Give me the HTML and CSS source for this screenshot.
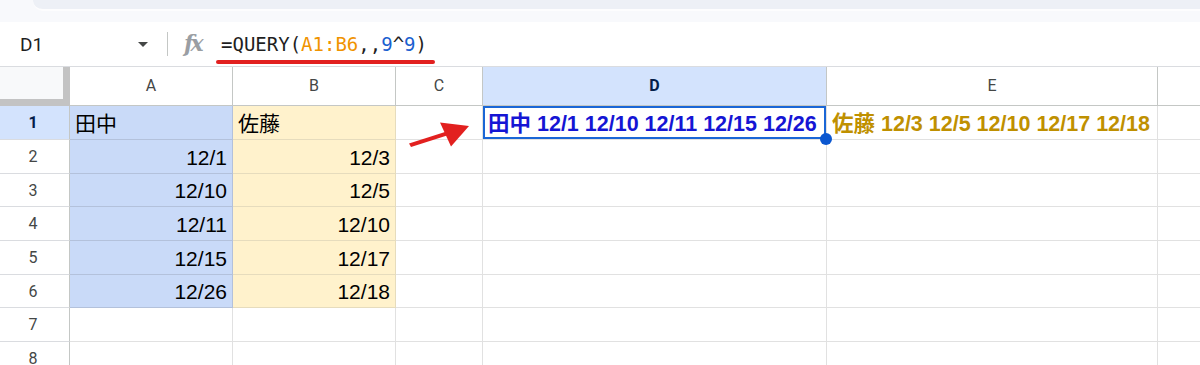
FILE: index.html
```html
<!DOCTYPE html>
<html lang="ja">

<head>
    <meta charset="utf-8">
    <meta name="viewport" content="width=device-width, initial-scale=1.0">
    <title>QUERY 9^9</title>

    <link rel="stylesheet" href="styles.css">
</head>

<body>
    <div class="topbar">
        <div class="pill"></div>
    </div>

    <div class="fbar">
        <div class="namebox">D1</div>
        <div class="caret"></div>
        <div class="sep"></div>
        <div class="fx">fx</div>
        <div class="formula">=QUERY(<span class="ref">A1:B6</span>,,<span class="num">9</span>^<span class="num">9</span>)</div>
    </div>

    <main class="grid">
        <!-- header -->
        <div class="corner"></div>
        <div class="colhead">A</div>
        <div class="colhead">B</div>
        <div class="colhead">C</div>
        <div class="colhead active">D</div>
        <div class="colhead">E</div>
        <div class="colhead last"></div>

        <!-- 1 -->
        <div class="rowhead active">1</div>
        <div class="cell a">田中</div>
        <div class="cell b">佐藤</div>
        <div class="cell"></div>
        <div class="cell sel"><span class="tanaka">田中 12/1 12/10 12/11 12/15 12/26</span></div>
        <div class="cell"><span class="sato">佐藤 12/3 12/5 12/10 12/17 12/18</span></div>
        <div class="cell last"></div>

        <!-- 2 -->
        <div class="rowhead">2</div>
        <div class="cell a right">12/1</div>
        <div class="cell b right">12/3</div>
        <div class="cell"></div>
        <div class="cell"></div>
        <div class="cell"></div>
        <div class="cell last"></div>

        <!-- 3 -->
        <div class="rowhead">3</div>
        <div class="cell a right">12/10</div>
        <div class="cell b right">12/5</div>
        <div class="cell"></div>
        <div class="cell"></div>
        <div class="cell"></div>
        <div class="cell last"></div>

        <!-- 4 -->
        <div class="rowhead">4</div>
        <div class="cell a right">12/11</div>
        <div class="cell b right">12/10</div>
        <div class="cell"></div>
        <div class="cell"></div>
        <div class="cell"></div>
        <div class="cell last"></div>

        <!-- 5 -->
        <div class="rowhead">5</div>
        <div class="cell a right">12/15</div>
        <div class="cell b right">12/17</div>
        <div class="cell"></div>
        <div class="cell"></div>
        <div class="cell"></div>
        <div class="cell last"></div>

        <!-- 6 -->
        <div class="rowhead">6</div>
        <div class="cell a right">12/26</div>
        <div class="cell b right">12/18</div>
        <div class="cell"></div>
        <div class="cell"></div>
        <div class="cell"></div>
        <div class="cell last"></div>

        <!-- 7 -->
        <div class="rowhead">7</div>
        <div class="cell"></div>
        <div class="cell"></div>
        <div class="cell"></div>
        <div class="cell"></div>
        <div class="cell"></div>
        <div class="cell last"></div>

        <!-- 8 -->
        <div class="rowhead">8</div>
        <div class="cell"></div>
        <div class="cell"></div>
        <div class="cell"></div>
        <div class="cell"></div>
        <div class="cell"></div>
        <div class="cell last"></div>
    </main>

    <svg class="arrow" width="80" height="45" viewBox="0 0 80 45">
        <polygon points="9,33.5 11,37 47,25.5 45,22" fill="#e2201f" />
        <polygon points="40,12.5 51,36.5 69,16" fill="#e2201f" />
    </svg>
</body>

</html>
```

FILE: styles.css
```css
body {
    margin: 0;
    background-color: white;
    font-family: "Liberation Sans", "Noto Sans CJK JP", sans-serif;
    overflow: hidden;
    position: relative;
    height: 365px;
}

/* top strip */
.topbar {
    height: 22px;
    background-color: #f8f9fc;
}

.pill {
    margin-left: 33px;
    height: 9px;
    background-color: #edf0f6;
    border-bottom-left-radius: 10px;
    border-bottom: 2px solid #fdfdfe;
}

/* formula bar */
.fbar {
    height: 44px;
    display: flex;
    align-items: center;
    padding-left: 20px;
}

.namebox {
    width: 118px;
    font-family: Roboto, "Liberation Sans", sans-serif;
    font-size: 19px;
    color: #1f1f1f;
}

.caret {
    width: 0;
    height: 0;
    border-left: 5px solid transparent;
    border-right: 5px solid transparent;
    border-top: 5px solid #444746;
    margin-top: 1px;
}

.sep {
    width: 1px;
    height: 24px;
    background-color: #c4c7c5;
    margin-left: 19px;
}

.fx {
    margin-left: 16px;
    width: 22px;
    font-family: "DejaVu Serif", serif;
    font-style: italic;
    font-weight: bold;
    font-size: 22px;
    color: #9a9ea3;
    letter-spacing: -3px;
    margin-top: -3px;
}

.formula {
    position: relative;
    margin-left: 15px;
    font-family: "DejaVu Sans Mono", monospace;
    font-size: 19px;
    color: #1f1f1f;
    margin-top: -1px;
}

.formula::after {
    content: "";
    position: absolute;
    left: -5px;
    right: -8px;
    bottom: -9px;
    height: 4px;
    border-radius: 2px;
    background-color: #e2201f;
}

.ref {
    color: #f09300;
}

.num {
    color: #1a5fd0;
}

/* sheet */
.grid {
    display: grid;
    grid-template-columns: 70px 163px 163px 87px 344px 331px 1fr;
    grid-template-rows: 39px 34px 34px 33px 34px 34px 33px 34px 34px;
    border-top: 1px solid #dadce0;
}

.corner {
    background-color: #f8f9fa;
    border-right: 7px solid #c3c3c3;
    border-bottom: 7px solid #c3c3c3;
}

.colhead {
    display: flex;
    align-items: center;
    justify-content: center;
    font-family: Roboto, "Liberation Sans", sans-serif;
    font-size: 16px;
    color: #444746;
    border-right: 1px solid #c4c7c5;
    border-bottom: 1px solid #c4c7c5;
    padding-bottom: 2px;
}

.colhead.active,
.rowhead.active {
    background-color: #d3e3fd;
    color: #041e49;
    font-weight: bold;
}

.rowhead {
    display: flex;
    align-items: center;
    justify-content: center;
    font-family: Roboto, "Liberation Sans", sans-serif;
    font-size: 16px;
    color: #444746;
    border-right: 1px solid #c4c7c5;
    border-bottom: 1px solid #dadce0;
    padding-right: 3px;
}

.cell {
    display: flex;
    align-items: flex-end;
    font-size: 21px;
    line-height: 24px;
    color: #000;
    padding: 0 5px 3px 5px;
    border-right: 1px solid #e1e1e1;
    border-bottom: 1px solid #e1e1e1;
    white-space: nowrap;
}

.last {
    border-right: none;
}

.right {
    justify-content: flex-end;
}

.cell.a {
    background-color: #c9daf8;
    border-color: #b3c1db;
}

.cell.b {
    background-color: #fff2cc;
    border-color: #e6dcbd;
}

.sel {
    position: relative;
    z-index: 2;
    box-shadow: inset 0 0 0 2px #1a66d6;
}

.sel::after {
    content: "";
    position: absolute;
    right: -6px;
    bottom: -6px;
    width: 12px;
    height: 12px;
    border-radius: 50%;
    background-color: #0b57d0;
}

.tanaka {
    font-size: 21.5px;
    font-weight: bold;
    color: #1515d4;
}

.sato {
    font-size: 21.5px;
    font-weight: bold;
    color: #bf9000;
}

.arrow {
    position: absolute;
    left: 400px;
    top: 110px;
}
```
